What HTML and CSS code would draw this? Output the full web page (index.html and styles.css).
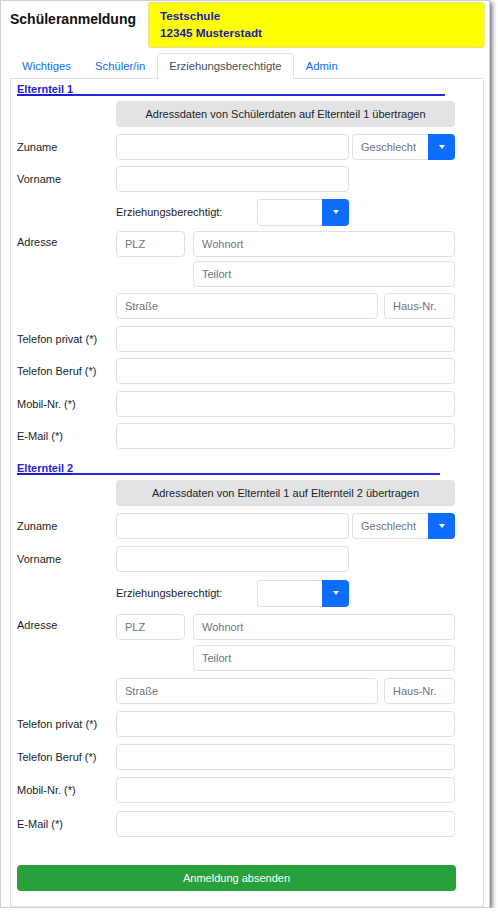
FILE: index.html
```html
<!DOCTYPE html>
<html lang="de">
<head>
<meta charset="utf-8">
<title>Schüleranmeldung</title>
<link rel="stylesheet" href="styles.css">
</head>
<body>
<div class="window">
  <header class="top">
    <h1 class="title">Schüleranmeldung</h1>
    <div class="school">
      <div>Testschule</div>
      <div>12345 Musterstadt</div>
    </div>
  </header>
  <nav class="tabs">
    <a class="tab">Wichtiges</a>
    <a class="tab">Schüler/in</a>
    <a class="tab active">Erziehungsberechtigte</a>
    <a class="tab">Admin</a>
  </nav>
  <div class="tab-content">
    <section class="parent">
      <a class="section-link">Elternteil 1<span class="fill fill-a"></span></a>
      <div class="row first"><span></span><button class="btn-copy">Adressdaten von Schülerdaten auf Elternteil 1 übertragen</button></div>
      <div class="row"><label>Zuname</label>
        <div class="line"><input class="inp w-name"><div class="sel sel-g"><span class="sel-box">Geschlecht</span><span class="sel-btn"><i class="caret"></i></span></div></div>
      </div>
      <div class="row"><label>Vorname</label><div class="line"><input class="inp w-name"></div></div>
      <div class="row row-erz"><span></span>
        <div class="erz"><span>Erziehungsberechtigt:</span><div class="sel sel-e"><span class="sel-box"></span><span class="sel-btn"><i class="caret"></i></span></div></div>
      </div>
      <div class="row row-addr"><label class="lbl-top">Adresse</label>
        <div class="addr"><input class="inp" placeholder="PLZ"><input class="inp" placeholder="Wohnort"><input class="inp teil" placeholder="Teilort"></div>
      </div>
      <div class="row"><span></span><div class="street"><input class="inp grow" placeholder="Straße"><input class="inp hnr" placeholder="Haus-Nr."></div></div>
      <div class="row"><label>Telefon privat (*)</label><input class="inp"></div>
      <div class="row"><label>Telefon Beruf (*)</label><input class="inp"></div>
      <div class="row"><label>Mobil-Nr. (*)</label><input class="inp"></div>
      <div class="row"><label>E-Mail (*)</label><input class="inp"></div>
    </section>
    <section class="parent second">
      <a class="section-link">Elternteil 2<span class="fill fill-b"></span></a>
      <div class="row first"><span></span><button class="btn-copy">Adressdaten von Elternteil 1 auf Elternteil 2 übertragen</button></div>
      <div class="row"><label>Zuname</label>
        <div class="line"><input class="inp w-name"><div class="sel sel-g"><span class="sel-box">Geschlecht</span><span class="sel-btn"><i class="caret"></i></span></div></div>
      </div>
      <div class="row"><label>Vorname</label><div class="line"><input class="inp w-name"></div></div>
      <div class="row row-erz"><span></span>
        <div class="erz"><span>Erziehungsberechtigt:</span><div class="sel sel-e"><span class="sel-box"></span><span class="sel-btn"><i class="caret"></i></span></div></div>
      </div>
      <div class="row row-addr"><label class="lbl-top">Adresse</label>
        <div class="addr"><input class="inp" placeholder="PLZ"><input class="inp" placeholder="Wohnort"><input class="inp teil" placeholder="Teilort"></div>
      </div>
      <div class="row"><span></span><div class="street"><input class="inp grow" placeholder="Straße"><input class="inp hnr" placeholder="Haus-Nr."></div></div>
      <div class="row"><label>Telefon privat (*)</label><input class="inp"></div>
      <div class="row"><label>Telefon Beruf (*)</label><input class="inp"></div>
      <div class="row"><label>Mobil-Nr. (*)</label><input class="inp"></div>
      <div class="row"><label>E-Mail (*)</label><input class="inp"></div>
    </section>
    <button class="btn-submit">Anmeldung absenden</button>
  </div>
</div>
</body>
</html>
```
FILE: styles.css
```css
* { box-sizing: border-box; }
body {
  margin: 0;
  background: #fff;
  font-family: "Liberation Sans", Arial, sans-serif;
  color: #212529;
}
.window {
  width: 490px;
  height: 908px;
  border: 1px solid #d0d0d0;
  box-shadow: 2px 2px 5px rgba(0, 0, 0, 0.6);
  background: #fff;
  display: flex;
  flex-direction: column;
  overflow: hidden;
}
.top {
  display: flex;
  align-items: flex-start;
  padding-top: 1px;
  height: 48px;
  flex: none;
}
.title {
  margin: 9px 0 0 0;
  padding-left: 9px;
  width: 147px;
  font-size: 14px;
  line-height: 17px;
  font-weight: bold;
  color: #111;
}
.school {
  width: 337px;
  height: 46px;
  background: #ffff00;
  border: 1px solid #e2e29a;
  border-radius: 3px;
  padding: 3.5px 11px;
  font-size: 11.7px;
  line-height: 17px;
  font-weight: bold;
  color: #1c1cb4;
}
.tabs {
  display: flex;
  margin: 4px 0 -1px 9px;
  position: relative;
  z-index: 1;
  flex: none;
}
.tab {
  display: block;
  height: 26px;
  padding: 0 11px;
  border: 1px solid transparent;
  border-bottom: none;
  border-radius: 4px 4px 0 0;
  font-size: 11.3px;
  line-height: 25px;
  color: #0d6efd;
}
.tab.active {
  color: #495057;
  background: #fff;
  border-color: #dee2e6;
}
.tab-content {
  margin-left: 9px;
  width: 474px;
  flex: 1;
  border: 1px solid #dee2e6;
  padding: 3px 28px 0 6px;
}
.parent { --gap: 6.5px; --addr-gap: 5px; --teil-gap: 4px; }
.parent.second { --gap: 7.2px; --addr-gap: 7px; --teil-gap: 5px; margin-top: 12px; }
.section-link {
  display: block;
  font-size: 11px;
  line-height: 15px;
  font-weight: bold;
  color: #1e1ed8;
  text-decoration: underline;
  text-decoration-thickness: 2px;
  text-underline-offset: 1px;
}
.fill {
  display: inline-block;
  height: 0;
  border-bottom: 2px solid #2a2ae0;
  vertical-align: -3px;
}
.fill-a { width: 372px; }
.fill-b { width: 367px; }
.row {
  display: grid;
  grid-template-columns: 99px 339px;
  align-items: center;
  margin-top: var(--gap);
}
.row.first { margin-top: 4px; }
.row label, .row > span {
  font-size: 11px;
}
.btn-copy {
  height: 26px;
  border: none;
  border-radius: 4px;
  background: #e2e3e5;
  color: #212529;
  font-family: inherit;
  font-size: 11px;
  padding: 0;
}
.inp {
  display: block;
  width: 100%;
  height: 26px;
  border: 1px solid #dfe1e4;
  border-radius: 4px;
  padding: 0 8px;
  font-family: inherit;
  font-size: 11px;
  color: #212529;
  background: #fff;
}
.inp::placeholder { color: #6c757d; opacity: 1; }
.line { display: flex; align-items: center; }
.w-name { width: 233px; flex: none; }
.sel { display: flex; height: 26px; }
.sel-g { margin-left: 3px; }
.sel-box {
  border: 1px solid #dfe1e4;
  border-right: none;
  border-radius: 4px 0 0 4px;
  font-size: 11px;
  color: #6c757d;
  line-height: 24px;
  padding-left: 8px;
}
.sel-g .sel-box { width: 76px; }
.sel-e .sel-box { width: 65px; }
.sel-btn {
  width: 27px;
  background: #0d6efd;
  border-radius: 0 4px 4px 0;
  display: flex;
  align-items: center;
  justify-content: center;
}
.caret {
  display: block;
  width: 0;
  height: 0;
  border-left: 3.5px solid transparent;
  border-right: 3.5px solid transparent;
  border-top: 4px solid #fff;
}
.row-erz .sel { height: 27px; }
.erz {
  width: 233px;
  display: flex;
  align-items: center;
  justify-content: space-between;
  font-size: 11px;
}
.row-addr { align-items: start; margin-top: var(--addr-gap); }
.lbl-top { line-height: 22px; }
.addr {
  display: grid;
  grid-template-columns: 69px 1fr;
  column-gap: 8px;
  row-gap: var(--teil-gap);
}
.addr .teil { grid-column: 2; }
.street { display: flex; gap: 6px; }
.grow { flex: 1; width: auto; }
.hnr { width: 71px; flex: none; }
.btn-submit {
  display: block;
  margin-top: 28px;
  width: 439px;
  height: 26px;
  border: none;
  border-radius: 4px;
  background: #28a03c;
  color: #fff;
  font-family: inherit;
  font-size: 11px;
}
```
